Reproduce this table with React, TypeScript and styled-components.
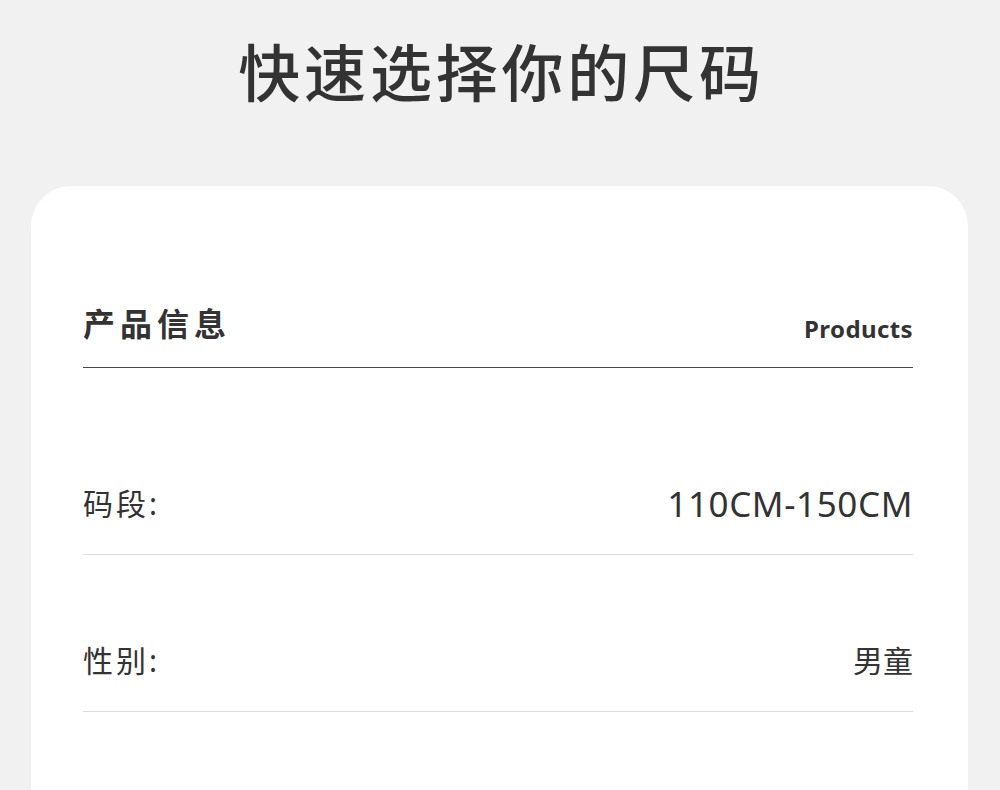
import React from "react";
import styled, { createGlobalStyle } from "styled-components";

const GlobalStyle = createGlobalStyle`
  html, body {
    margin: 0;
    padding: 0;
    background: #f1f1f1;
  }
  body {
    font-family: "Noto Sans", "Noto Sans CJK SC", sans-serif;
    color: #333;
  }
`;

const Page = styled.div`
  display: flex;
  flex-direction: column;
  padding: 39px 32px 0 31px;
  min-height: 790px;
  box-sizing: border-box;
  overflow: hidden;
`;

const Title = styled.h1`
  margin: 0 0 85px;
  text-align: center;
  font-family: "Noto Sans CJK SC", sans-serif;
  font-weight: 500;
  font-size: 62px;
  line-height: 62px;
  letter-spacing: 3.8px;
  padding-left: 4px;
  color: #333;
`;

const Card = styled.section`
  background: #ffffff;
  border-radius: 40px 40px 0 0;
  padding: 116px 55px 120px 52px;
`;

const Header = styled.div`
  display: flex;
  justify-content: space-between;
  align-items: flex-end;
  padding-bottom: 25px;
  border-bottom: 1px solid #4a4a4a;
`;

const HeaderTitle = styled.h2`
  margin: 0;
  font-family: "Noto Sans CJK SC", sans-serif;
  font-weight: 700;
  font-size: 32px;
  line-height: 40px;
  letter-spacing: 5px;
  color: #333;
`;

const HeaderSub = styled.span`
  font-family: "Noto Sans", sans-serif;
  font-weight: 700;
  font-size: 24px;
  line-height: 24px;
  letter-spacing: 0.4px;
  color: #333;
  margin-bottom: 1px;
`;

const List = styled.div`
  display: flex;
  flex-direction: column;
  padding-top: 30px;
`;

const Row = styled.div`
  display: flex;
  justify-content: space-between;
  align-items: flex-end;
  height: 157px;
  box-sizing: border-box;
  padding-bottom: 30px;
  border-bottom: 1px solid #dcdcdc;
`;

const Label = styled.span`
  font-family: "Noto Sans", "Noto Sans CJK SC", sans-serif;
  font-weight: 400;
  font-size: 30px;
  line-height: 40px;
  letter-spacing: 3px;
  color: #333;
`;

const Value = styled.span<{ $latin?: boolean }>`
  font-family: "Noto Sans", "Noto Sans CJK SC", sans-serif;
  font-weight: 400;
  font-size: ${(p) => (p.$latin ? "35px" : "30px")};
  letter-spacing: ${(p) => (p.$latin ? "0.6px" : "0")};
  line-height: 40px;
  color: #333;
`;

const rows = [
  { label: "码段:", value: "110CM-150CM", latin: true },
  { label: "性别:", value: "男童", latin: false },
];

export default function App() {
  return (
    <>
      <GlobalStyle />
      <Page>
        <Title>快速选择你的尺码</Title>
        <Card>
          <Header>
            <HeaderTitle>产品信息</HeaderTitle>
            <HeaderSub>Products</HeaderSub>
          </Header>
          <List>
            {rows.map((r) => (
              <Row key={r.label}>
                <Label>{r.label}</Label>
                <Value $latin={r.latin}>{r.value}</Value>
              </Row>
            ))}
          </List>
        </Card>
      </Page>
    </>
  );
}
